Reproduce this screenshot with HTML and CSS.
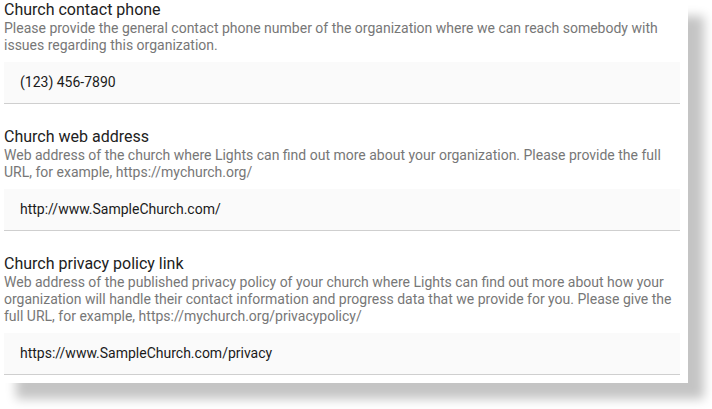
FILE: index.html
```html
<!DOCTYPE html>
<html>
<head>
<meta charset="utf-8">
<link rel="stylesheet" href="styles.css">
</head>
<body>
<div class="card">
  <section class="field">
    <div class="label">Church contact phone</div>
    <div class="desc">Please provide the general contact phone number of the organization where we can reach somebody with issues regarding this organization.</div>
    <div class="input">(123) 456-7890</div>
  </section>
  <section class="field">
    <div class="label">Church web address</div>
    <div class="desc">Web address of the church where Lights can find out more about your organization. Please provide the full URL, for example, https://mychurch.org/</div>
    <div class="input">http://www.SampleChurch.com/</div>
  </section>
  <section class="field">
    <div class="label">Church privacy policy link</div>
    <div class="desc">Web address of the published privacy policy of your church where Lights can find out more about how your organization will handle their contact information and progress data that we provide for you. Please give the full URL, for example, https://mychurch.org/privacypolicy/</div>
    <div class="input">https://www.SampleChurch.com/privacy</div>
  </section>
</div>
</body>
</html>
```

FILE: styles.css
```css
html, body {
  margin: 0;
  padding: 0;
  background: #ffffff;
}
body {
  font-family: Roboto, "Liberation Sans", sans-serif;
  width: 712px;
  height: 409px;
  overflow: hidden;
}
.card {
  width: 688px;
  height: 383px;
  box-sizing: border-box;
  padding: 0 8px 8px 4px;
  background: #ffffff;
  box-shadow: 16px 16px 10px rgba(0, 0, 0, 0.23);
  display: flex;
  flex-direction: column;
  gap: 23px;
}
.label {
  font-size: 16px;
  line-height: 20px;
  color: #212121;
}
.desc {
  font-size: 14px;
  line-height: 17px;
  color: #777777;
}
.input {
  margin-top: 8px;
  height: 41px;
  background: #fafafa;
  border-bottom: 1px solid #cfcfcf;
  padding-left: 16px;
  font-size: 14px;
  line-height: 41px;
  color: #1a1a1a;
}
```
